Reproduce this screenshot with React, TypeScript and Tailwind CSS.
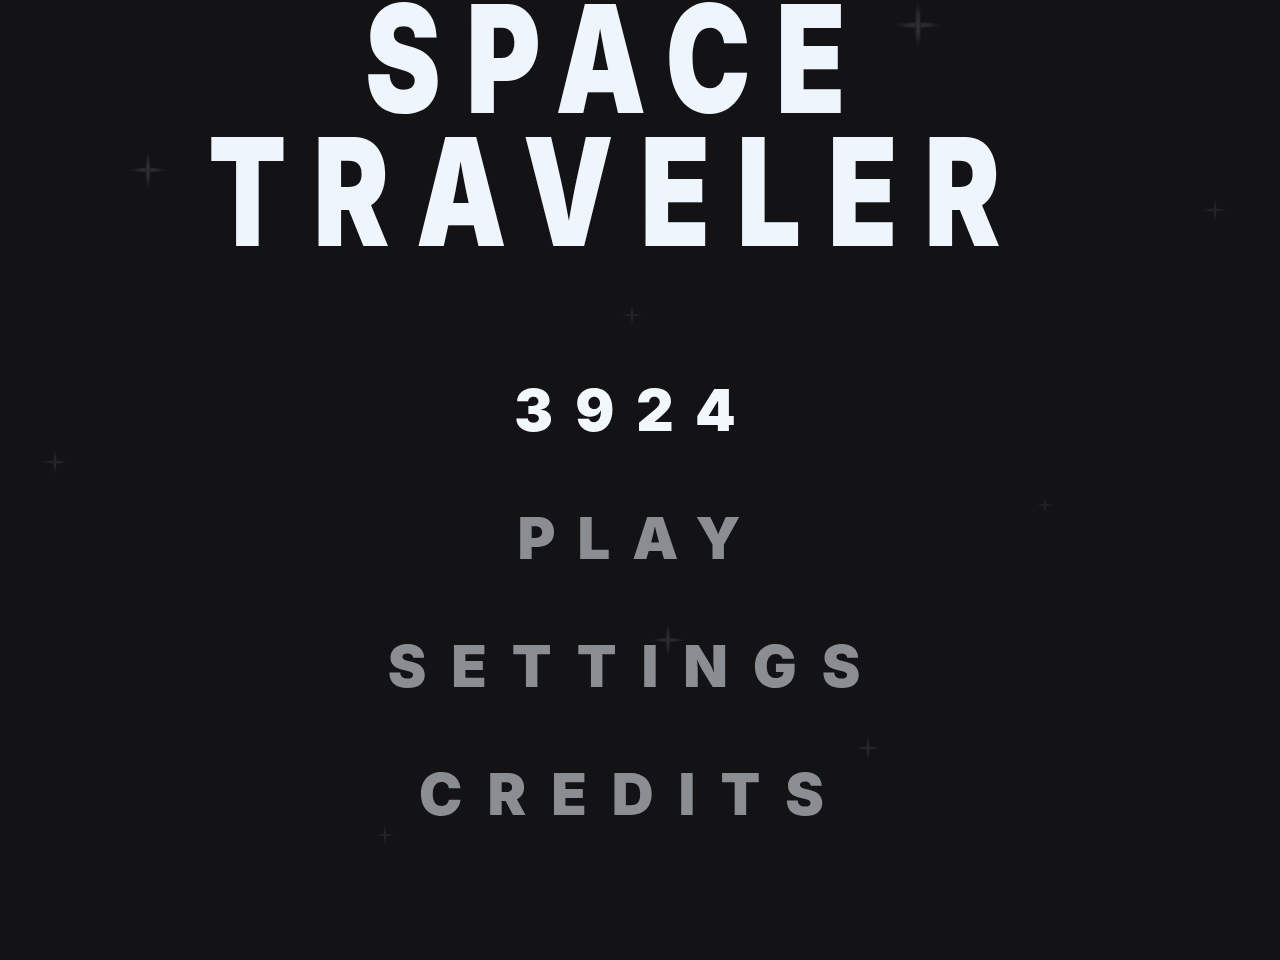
const stars = [
  { x: 148, y: 170, s: 44, o: 0.9 },
  { x: 918, y: 25, s: 56, o: 0.9 },
  { x: 632, y: 315, s: 26, o: 0.6 },
  { x: 55, y: 462, s: 30, o: 0.7 },
  { x: 668, y: 640, s: 40, o: 0.8 },
  { x: 868, y: 748, s: 30, o: 0.7 },
  { x: 1215, y: 210, s: 30, o: 0.6 },
  { x: 385, y: 835, s: 26, o: 0.6 },
  { x: 1045, y: 505, s: 22, o: 0.5 },
];

function Sparkle({ x, y, s, o }: { x: number; y: number; s: number; o: number }) {
  return (
    <svg
      className="absolute pointer-events-none"
      style={{ left: x - s / 2, top: y - s / 2, width: s, height: s, opacity: o }}
      viewBox="0 0 40 40"
    >
      <defs>
        <radialGradient id="glow">
          <stop offset="0%" stopColor="#3a393e" />
          <stop offset="45%" stopColor="#2a292d" />
          <stop offset="100%" stopColor="#131215" stopOpacity="0" />
        </radialGradient>
      </defs>
      <ellipse cx="20" cy="20" rx="20" ry="3" fill="url(#glow)" />
      <ellipse cx="20" cy="20" rx="3" ry="20" fill="url(#glow)" />
    </svg>
  );
}

const menu = [
  { label: "PLAY", cls: "tracking-[22px]" },
  { label: "SETTINGS", cls: "tracking-[25px] mr-[7px]" },
  { label: "CREDITS", cls: "tracking-[25px] mr-[12px]" },
];

export default function App() {
  return (
    <div className="relative h-screen w-full overflow-hidden bg-[#131215] font-['Inter','DejaVu_Sans',sans-serif]">
      {stars.map((st, i) => (
        <Sparkle key={i} {...st} />
      ))}

      <div className="relative flex flex-col items-center">
        <h1 className="-mt-[8px] mr-[44px] flex flex-col items-center text-[150px] leading-[133px] font-black text-[#eef5fc]">
          <span className="inline-block scale-x-[0.76] tracking-[33px]">SPACE</span>
          <span className="inline-block scale-x-[0.76] tracking-[35px]">TRAVELER</span>
        </h1>

        <div className="mt-[88px] flex flex-col items-center text-[58px] leading-[128px] font-black">
          <div className="mr-[8px] text-[#f2f7fc] tracking-[22px]">3924</div>
          {menu.map((m) => (
            <button key={m.label} className={`text-[#8a8d91] leading-[128px] ${m.cls}`}>
              {m.label}
            </button>
          ))}
        </div>
      </div>
    </div>
  );
}
